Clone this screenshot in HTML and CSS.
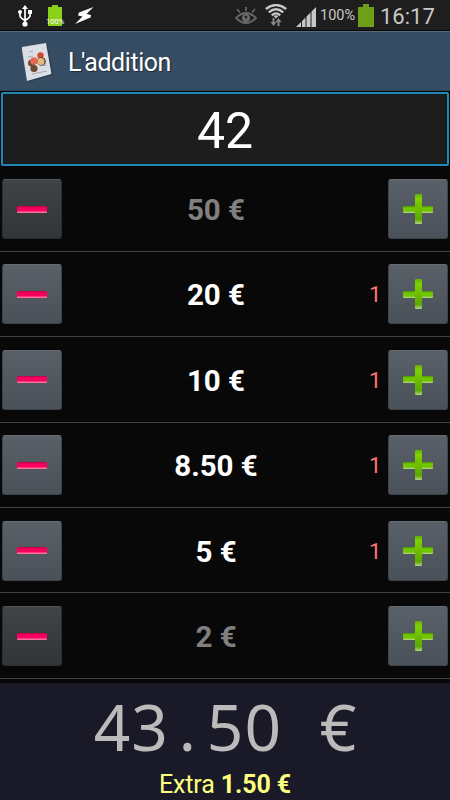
FILE: index.html
```
<!DOCTYPE html>
<html lang="fr">
<head>
  <meta charset="UTF-8">
  <title>L'addition</title>
  <link rel="stylesheet" href="styles.css">
</head>
<body>
  <div class="statusbar">
    <svg class="usb" width="16" height="22" viewBox="0 0 16 22">
      <path d="M8 3V19M3 7V11Q3 12.500 8 15.500M13 7V11Q13 12.500 8 15.500" fill="none" stroke="#fff" stroke-width="1.7"/>
      <path d="M8 0L11 4H5Z" fill="#fff"/>
      <rect x="11" y="5" width="4" height="4" fill="#fff"/>
      <circle cx="3" cy="7" r="2" fill="#fff"/>
      <circle cx="8" cy="19" r="2.600" fill="#fff"/>
    </svg>
    <div class="battery-note">
      <svg width="14" height="21" viewBox="0 0 14 21"><path d="M0 2H4V0H10V2H14V21H0Z" fill="#8bd117"/></svg>
      <span>100%</span>
    </div>
    <svg class="flash" width="20" height="18" viewBox="0 0 20 18">
      <path d="M18.500 0L4 5.500L3 8.500L7.500 9.500L0 17L15.500 10.500L16 8L11.500 7Z" fill="#fff"/>
    </svg>
    <svg class="eye" width="22" height="18" viewBox="0 0 22 18">
      <path d="M1 11Q11 1 21 11Q11 21 1 11Z" fill="none" stroke="#686868" stroke-width="1.8"/>
      <circle cx="11" cy="11" r="4.200" fill="#686868"/>
      <circle cx="11" cy="10" r="1.300" fill="#1e1e1e"/>
      <path d="M11 0V4M2 2L5 5.500M20 2L17 5.500" stroke="#686868" stroke-width="1.700"/>
    </svg>
    <svg class="wifi" width="22" height="23" viewBox="0 0 22 23">
      <path d="M.8 5Q11 -3 21.200 5M3.800 8.300Q11 2.300 18.200 8.300M6.800 11.300Q11 7.500 15.200 11.300" fill="none" stroke="#c8c8c8" stroke-width="2.300"/>
      <path d="M11 14.500L8.500 12Q11 10.500 13.500 12Z" fill="#c8c8c8"/>
      <path d="M8.500 14V20M13.500 22V16" stroke="#888" stroke-width="2"/>
      <path d="M5.500 18H11.500L8.500 22ZM10.500 18H16.500L13.500 14Z" fill="#888"/>
    </svg>
    <svg class="signal" width="20" height="20" viewBox="0 0 20 20">
      <path d="M0 20L5 15V20ZM6 20V14L9.500 10.500V20ZM10.500 20V9.500L14.500 5.500V20ZM15.500 20V4.500L20 0V20Z" fill="#c8c8c8"/>
    </svg>
    <span class="percent">100%</span>
    <svg class="battery" width="16" height="23" viewBox="0 0 16 23"><path d="M0 3H5V0H11V3H16V23H0Z" fill="#6f9f19"/></svg>
    <span class="clock">16:17</span>
  </div>

  <div class="titlebar">
    <svg class="logo" width="32" height="40" viewBox="0 0 32 40">
      <path d="M0 5L25 1L31 32L6 39Z" fill="#26394b"/>
      <path d="M-.5 4L24 0L29.500 31L5 38Z" fill="#dcdee5"/>
      <path d="M7 9L11 8M6 14L11 13M10 31L25 28M22 23L25 22" stroke="#92949b" stroke-width=".7"/>
      <circle cx="9.500" cy="20" r="3.500" fill="#704a30"/>
      <circle cx="12" cy="18" r="3.800" fill="#e56a50"/>
      <circle cx="18.500" cy="12.500" r="3.200" fill="#d44b2b"/>
      <circle cx="19.500" cy="18.500" r="4.300" fill="#51372b"/>
      <circle cx="19" cy="18.500" r="3.500" fill="#e5bb7d"/>
      <circle cx="12" cy="25.500" r="3.600" fill="#6d4930"/>
    </svg>
    <h1>L'addition</h1>
  </div>

  <div class="amount">42</div>

  <div class="list">
    <div class="row off">
      <button class="minus"></button>
      <span class="value">50 €</span>
      <span class="count"></span>
      <button class="plus"></button>
    </div>
    <div class="row">
      <button class="minus"></button>
      <span class="value">20 €</span>
      <span class="count">1</span>
      <button class="plus"></button>
    </div>
    <div class="row">
      <button class="minus"></button>
      <span class="value">10 €</span>
      <span class="count">1</span>
      <button class="plus"></button>
    </div>
    <div class="row">
      <button class="minus"></button>
      <span class="value">8.50 €</span>
      <span class="count">1</span>
      <button class="plus"></button>
    </div>
    <div class="row">
      <button class="minus"></button>
      <span class="value">5 €</span>
      <span class="count">1</span>
      <button class="plus"></button>
    </div>
    <div class="row off">
      <button class="minus"></button>
      <span class="value">2 €</span>
      <span class="count"></span>
      <button class="plus"></button>
    </div>
  </div>

  <div class="footer">
    <div class="total"><span>4</span><span>3</span><span>.</span><span>5</span><span>0</span><span> </span><span>€</span></div>
    <div class="extra">Extra <b>1.50 €</b></div>
  </div>
</body>
</html>
```
FILE: styles.css
```
* { box-sizing: border-box; }
body {
  margin: 0;
  width: 450px;
  height: 800px;
  overflow: hidden;
  display: flex;
  flex-direction: column;
  background: #080808;
  color: white;
  font-family: Roboto, sans-serif;
}
svg { display: block; flex: none; }

/* status bar */
.statusbar {
  height: 31px;
  flex: none;
  display: flex;
  align-items: flex-start;
  background: #1e1e1e;
  border-bottom: 1px solid #080808;
  color: #c8c8c8;
}
.usb { margin: 5px 0 0 17px; }
.battery-note {
  position: relative;
  margin: 5px 0 0 15px;
}
.battery-note span {
  position: absolute;
  left: -2px;
  top: 12px;
  color: white;
  font-size: 7.5px;
  line-height: 10px;
}
.flash { margin: 7px 0 0 13px; }
.eye { margin: 7px 0 0 140px; }
.wifi { margin: 4px 0 0 8px; }
.signal { margin: 7px 0 0 9px; }
.percent {
  width: 35px;
  margin: 7px 0 0 4px;
  font-size: 14.5px;
  line-height: 18px;
}
.battery { margin: 4px 0 0 3px; }
.clock {
  margin: 4px 0 0 6px;
  font-size: 22px;
  line-height: 26px;
}

/* title */
.titlebar {
  height: 60px;
  flex: none;
  display: flex;
  align-items: flex-start;
  background: #354c63;
  border-top: 1px solid #5b6a79;
  border-bottom: 1px solid #29435a;
}
.logo { margin: 11px 0 0 22px; }
h1 {
  margin: 16px 0 0 14px;
  font-size: 25px;
  line-height: 30px;
  letter-spacing: -.45px;
  font-weight: 400;
  text-shadow: 1px 1px 1px #1c2938;
}

.amount {
  height: 74px;
  flex: none;
  margin: 1px 1px 0;
  border: 2px solid #2488b5;
  border-radius: 2px;
  background: #1d1d1d;
  box-shadow: inset 0 0 0 1px #0d1b22;
  font-size: 50px;
  line-height: 75px;
  text-align: center;
}

/* price rows */
.list {
  flex: none;
  display: grid;
  grid-template-rows: repeat(6, 85.4px);
  height: 517px;
  padding-top: .4px;
}
.row {
  display: flex;
  align-items: center;
  padding: 1px 2px 0;
  border-bottom: 1px solid #424242;
}
.value {
  width: 308px;
  text-align: center;
  font-size: 29.5px;
  line-height: 36px;
  font-weight: 700;
  padding-top: 2px;
}
.off .value { color: #808080; }
.count {
  width: 19px;
  margin-left: -1px;
  padding-top: 2px;
  color: #ff7474;
  font-size: 22px;
  line-height: 28px;
}
button {
  width: 60px;
  height: 60px;
  flex: none;
  display: grid;
  place-items: center;
  padding: 0;
  border: 1px solid #3d444a;
  border-top-color: #646b71;
  border-radius: 3px;
  background: linear-gradient(#596067, #4a5158);
}
.off .minus {
  background: linear-gradient(#404447, #313538);
  border-color: #2a2e31;
  border-top-color: #505558;
}
.minus::before {
  content: "";
  width: 30px;
  height: 7px;
  border-radius: 1px;
  background: linear-gradient(#bf0048, #f9005f 30%, #f9005f 65%, #ff6f9c 90%);
}
.plus::before,
.plus::after {
  content: "";
  grid-area: 1 / 1;
  border-radius: 1px;
}
.plus::before {
  width: 30px;
  height: 7px;
  background: linear-gradient(#4d9200, #70c900 30%, #70c000 70%, #b9dc8b);
}
.plus::after {
  width: 7px;
  height: 30px;
  background: linear-gradient(#67ad08, #7ed100 15%, #5ca800 85%, #b4d489);
}

/* total */
.footer {
  flex: 1;
  background: #1a1927;
  text-align: center;
}
.total {
  display: grid;
  grid-template-columns: repeat(7, 37.7px);
  justify-content: center;
  height: 84px;
  color: #bbb;
  font-family: "Noto Sans", sans-serif;
  font-size: 64px;
  line-height: 88px;
}
.extra {
  color: #ffff80;
  font-size: 25px;
  line-height: 35px;
  letter-spacing: -.1px;
}
```
